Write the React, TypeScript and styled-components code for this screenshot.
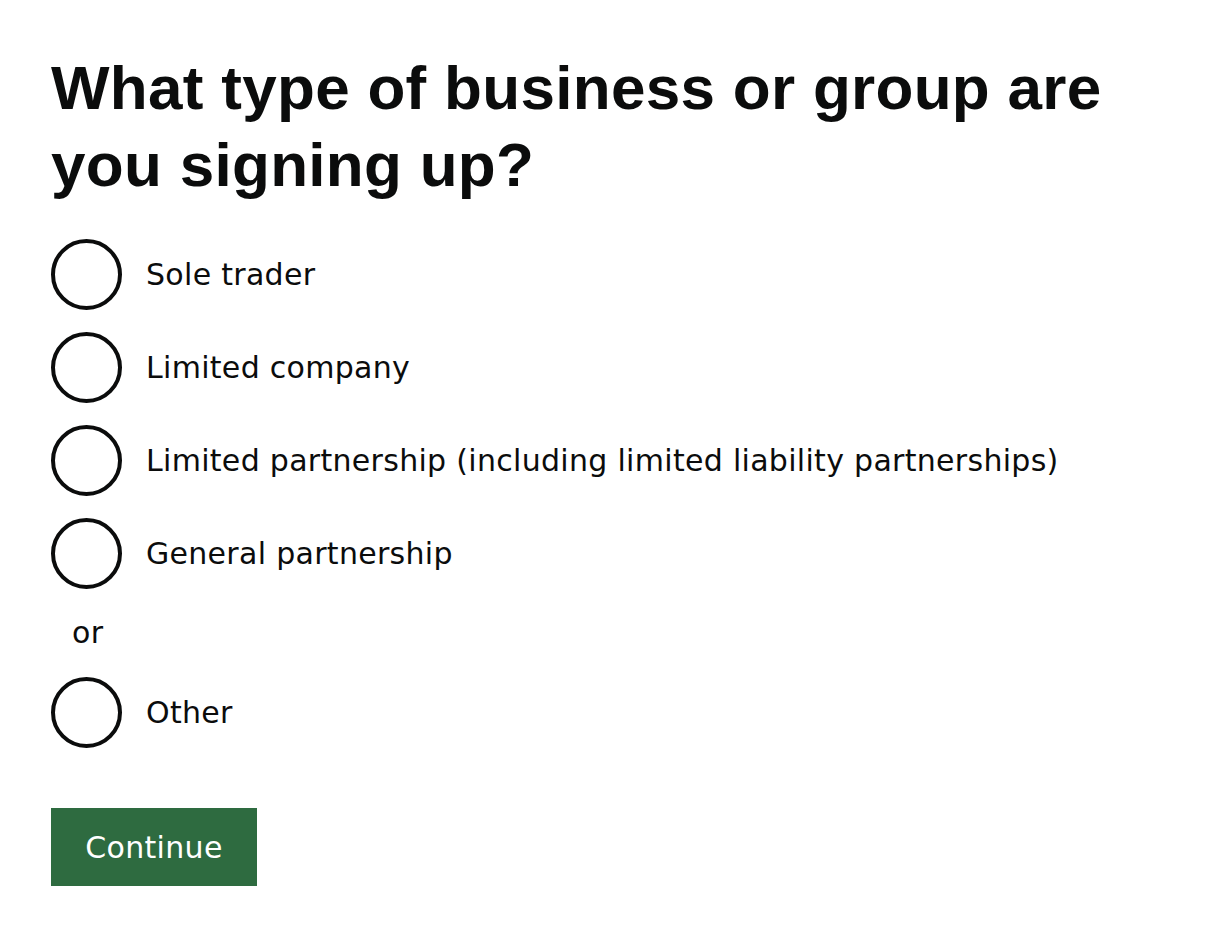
import React from "react";
import styled, { createGlobalStyle } from "styled-components";

const GlobalStyle = createGlobalStyle`
  html, body {
    margin: 0;
    padding: 0;
    background: #ffffff;
  }
  body {
    font-family: "DejaVu Sans", "Liberation Sans", Arial, sans-serif;
    color: #0b0c0c;
  }
`;

const Page = styled.main`
  padding: 49px 0 0 51px;
`;

const Heading = styled.h1`
  margin: 0 0 36px;
  font-family: "Liberation Sans", Arial, sans-serif;
  font-size: 62px;
  line-height: 77px;
  font-weight: 700;
  letter-spacing: 0.3px;
  max-width: 1120px;
`;

const Fieldset = styled.fieldset`
  margin: 0;
  padding: 0;
  border: 0;
  display: flex;
  flex-direction: column;
  gap: 22px;
`;

const RadioItem = styled.label`
  display: flex;
  align-items: center;
  gap: 24px;
  cursor: pointer;
`;

const RadioCircle = styled.span`
  width: 71px;
  height: 71px;
  box-sizing: border-box;
  border: 4px solid #0b0c0c;
  border-radius: 50%;
  flex-shrink: 0;
`;

const Label = styled.span`
  font-size: 30px;
  line-height: 36px;
  letter-spacing: 0.3px;
`;

const Divider = styled.div`
  font-size: 30px;
  line-height: 44px;
  padding-left: 21px;
  letter-spacing: 0.3px;
`;

const Button = styled.button`
  margin-top: 60px;
  width: 206px;
  height: 78px;
  border: 0;
  padding: 0;
  background: #2e6b40;
  box-shadow: 0 4px 0 #1a3a23;
  color: #ffffff;
  font-family: inherit;
  font-size: 30px;
  letter-spacing: 0.3px;
  cursor: pointer;
`;

const options = [
  "Sole trader",
  "Limited company",
  "Limited partnership (including limited liability partnerships)",
  "General partnership",
];

const Radio: React.FC<{ label: string }> = ({ label }) => (
  <RadioItem>
    <RadioCircle />
    <Label>{label}</Label>
  </RadioItem>
);

export default function App() {
  return (
    <>
      <GlobalStyle />
      <Page>
        <Heading>What type of business or group are you signing up?</Heading>
        <Fieldset>
          {options.map(option => (
            <Radio key={option} label={option} />
          ))}
          <Divider>or</Divider>
          <Radio label="Other" />
        </Fieldset>
        <Button>Continue</Button>
      </Page>
    </>
  );
}
